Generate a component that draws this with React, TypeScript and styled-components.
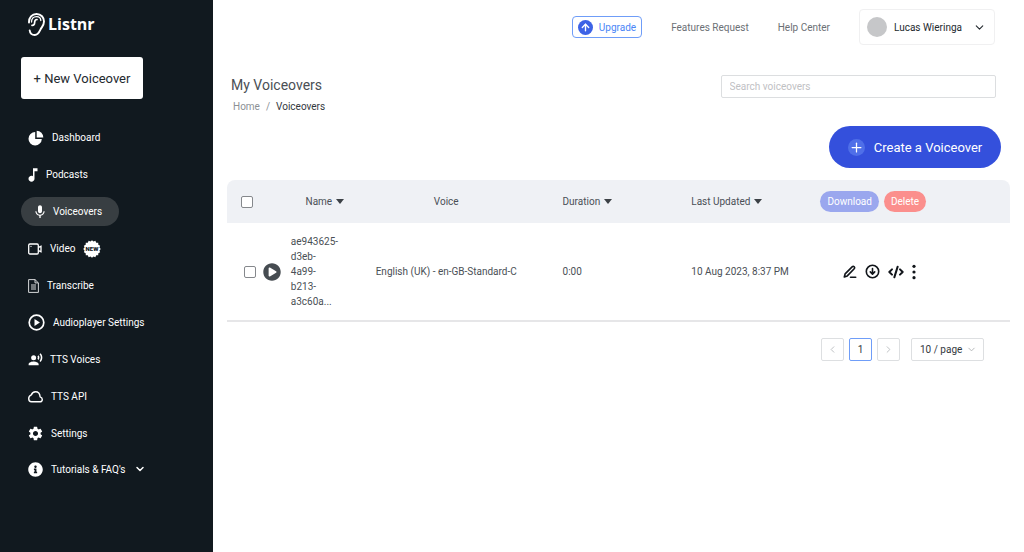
import React from "react";
import styled, { createGlobalStyle } from "styled-components";
import { ArrowUp, ChevronDown, ChevronLeft, ChevronRight, CodeXml, Plus } from "lucide-react";
import { MdMic, MdMusicNote, MdRecordVoiceOver, MdSettings } from "react-icons/md";
import { FaInfoCircle, FaPlayCircle } from "react-icons/fa";

const GlobalStyle = createGlobalStyle`
  *, *::before, *::after { box-sizing: border-box; }
  body {
    margin: 0;
    background: #fff;
    color: #4a4f55;
    font-family: Roboto, "Liberation Sans", sans-serif;
    font-size: 10px;
    line-height: 15px;
  }
  button, input, select { font: inherit; color: inherit; }
  button { cursor: pointer; padding: 0; border: 0; background: none; }
  a { color: inherit; text-decoration: none; }
  svg { flex: none; display: block; }
`;

const Page = styled.div`
  display: flex;
  min-height: 100vh;
`;

const Sidebar = styled.aside`
  flex: 0 0 213px;
  background: #11191f;
  color: #fff;
`;

const Logo = styled.a`
  display: flex;
  align-items: center;
  gap: 3px;
  height: 48px;
  padding-left: 28px;
  font-family: "Open Sans", sans-serif;
  font-size: 16px;
  font-weight: 700;
  line-height: 20px;
`;

const NewButton = styled.button`
  display: block;
  width: 122px;
  height: 42px;
  margin: 9px 0 24px 21px;
  border-radius: 3px;
  background: #fff;
  color: #23292e;
  font-size: 13px;
`;

const NavList = styled.ul<{ $row: number }>`
  display: grid;
  grid-auto-rows: ${(p) => p.$row}px;
  gap: 8px;
  margin: 0 0 8px;
  padding: 0 0 0 21px;
  list-style: none;
`;

const NavLink = styled.a<{ $active?: boolean }>`
  display: inline-flex;
  align-items: center;
  gap: 8px;
  height: 100%;
  padding: 0 ${(p) => (p.$active ? "17px 0 14px" : "7px")};
  border-radius: 15px;
  background: ${(p) => (p.$active ? "#383e42" : "transparent")};
`;

const NavText = styled.span`
  white-space: nowrap;
`;

const Main = styled.main`
  flex: 1;
  min-width: 0;
`;

const TopBar = styled.header`
  display: flex;
  align-items: center;
  justify-content: flex-end;
  gap: 29px;
  height: 54px;
  padding-right: 29px;
  color: #6b7075;
`;

const Upgrade = styled.button`
  display: flex;
  align-items: center;
  gap: 6px;
  height: 22px;
  padding: 0 5px;
  border: 1px solid #6f9df8;
  border-radius: 4px;
  color: #4a86f7;
`;

const Dot = styled.span<{ $size: number; $bg: string }>`
  display: grid;
  flex: none;
  place-items: center;
  width: ${(p) => p.$size}px;
  height: ${(p) => p.$size}px;
  border-radius: 50%;
  background: ${(p) => p.$bg};
  color: #fff;
`;

const UserMenu = styled.button`
  display: flex;
  align-items: center;
  gap: 7px;
  width: 136px;
  height: 36px;
  padding: 0 8px 0 7px;
  border: 1px solid #f0f0f1;
  border-radius: 4px;
  color: #23292e;
  white-space: nowrap;
  svg { margin-left: auto; }
`;

const Heading = styled.section`
  display: flex;
  align-items: flex-start;
  justify-content: space-between;
  padding: 21px 28px 0 18px;
`;

const Title = styled.h1`
  margin: 0;
  font-size: 14px;
  font-weight: 400;
  line-height: 20px;
`;

const Crumbs = styled.nav`
  display: flex;
  gap: 6px;
  margin-top: 4px;
  padding-left: 2px;
  color: #8c9095;
  [aria-current] { color: #33383d; }
`;

const Search = styled.input`
  width: 36%;
  height: 23px;
  padding: 0 8px;
  border: 1px solid #dcdee0;
  border-radius: 2px;
  background: #fff;
  &::placeholder { color: #bfc1c4; opacity: 1; }
`;

const Actions = styled.div`
  display: flex;
  justify-content: flex-end;
  padding: 12px 23px 12px 0;
`;

const Create = styled.button`
  display: flex;
  align-items: center;
  justify-content: center;
  gap: 9px;
  width: 172px;
  height: 42px;
  border-radius: 21px;
  background: #3450dc;
  color: #fff;
  font-size: 13px;
`;

const TableWrap = styled.div`
  padding: 0 14px;
`;

const Table = styled.table`
  width: 100%;
  table-layout: fixed;
  border-collapse: separate;
  border-spacing: 0;
  thead th { height: 43px; background: #eff1f5; font-weight: 400; }
  thead th:first-child { border-top-left-radius: 8px; }
  thead th:last-child { border-top-right-radius: 8px; }
  tbody td { height: 99px; border-bottom: 2px solid #e6e6e8; }
`;

const Th = styled.th<{ $w: number; $pad?: number; $align?: "left" | "center" }>`
  width: ${(p) => p.$w}%;
  padding: 0 0 0 ${(p) => p.$pad ?? 0}px;
  text-align: ${(p) => p.$align ?? "left"};
`;

const Td = styled.td<{ $pad?: number; $align?: "left" | "center" }>`
  padding: 0 0 0 ${(p) => p.$pad ?? 0}px;
  text-align: ${(p) => p.$align ?? "left"};
`;

const Sort = styled.button`
  display: inline-flex;
  align-items: center;
  gap: 4px;
  &::after {
    content: "";
    border: 4px solid transparent;
    border-top: 5px solid #3c4146;
    border-bottom: 0;
  }
`;

const Check = styled.input.attrs({ type: "checkbox" })`
  appearance: none;
  display: block;
  flex: none;
  width: 12px;
  height: 12px;
  margin: 0;
  border: 1px solid #85888c;
  border-radius: 2px;
  background: #fff;
`;

const Row = styled.div<{ $gap: number }>`
  display: flex;
  align-items: center;
  gap: ${(p) => p.$gap}px;
`;

const FileName = styled.div`
  width: 48px;
`;

const Pill = styled.button<{ $bg: string }>`
  height: 21px;
  padding: 0 7px;
  border-radius: 11px;
  background: ${(p) => p.$bg};
  color: #fff;
`;

const IconButton = styled.button`
  display: block;
  color: #11151a;
`;

const Pagination = styled.nav`
  display: flex;
  justify-content: flex-end;
  gap: 5px;
  padding: 16px 40px 0 0;
`;

const PageButton = styled.button<{ $active?: boolean }>`
  width: 23px;
  height: 23px;
  border: 1px solid ${(p) => (p.$active ? "#6f9df8" : "#dddfe1")};
  border-radius: 2px;
  color: ${(p) => (p.$active ? "#33383d" : "#b9bcbf")};
  display: grid;
  place-items: center;
`;

const SelectBox = styled.div`
  display: grid;
  align-items: center;
  width: 73px;
  height: 23px;
  margin-left: 6px;
  border: 1px solid #dddfe1;
  border-radius: 2px;
  select, svg { grid-area: 1 / 1; }
  select {
    appearance: none;
    width: 100%;
    padding: 0 8px;
    border: 0;
    background: none;
    color: #33383d;
  }
  svg { justify-self: end; margin-right: 6px; color: #b0b3b6; pointer-events: none; }
`;

const EarLogo = () => (
  <svg width="17" height="23" viewBox="0 0 17 23" fill="none" stroke="#fff" strokeLinecap="round">
    <path d="M1 9.500C.8 4.500 4 1 8.500 1c4.700 0 7.500 3.500 7.500 7.500 0 4-2.300 5.500-3.600 8.200-1.200 2.600-2.200 5.300-5.600 5.300-3 0-4.800-1.900-5.100-4.500" strokeWidth="1.900" />
    <path d="M3.500 9C3.500 5.500 5.500 3.600 8.500 3.600c2.600 0 4.300 1.700 4.300 4" strokeWidth="1.300" />
    <path d="M4 12.300c1.800.2 2.600-1 2.600-2.600C6.600 7.500 7.500 6.500 9 6.500" strokeWidth="1.700" />
  </svg>
);

const PieIcon = () => (
  <svg width="16" height="16" viewBox="0 0 16 16" fill="#fff">
    <path d="M7.200 2.100v6.800h6.600A6.650 6.650 0 1 1 7.200 2.100z" />
    <path d="M8.700.7A6.700 6.700 0 0 1 15.300 7.400H8.700z" />
  </svg>
);

const VideoIcon = () => (
  <svg width="14" height="12" viewBox="0 0 14 12" fill="none" stroke="#fff" strokeWidth="1.300">
    <rect x=".7" y="1" width="9.600" height="10" rx="1.200" />
    <path d="M10.500 4.300 13 3.300v5.400l-2.500-1" />
    <circle cx="3" cy="3.400" r=".6" fill="#fff" stroke="none" />
  </svg>
);

const DocumentIcon = () => (
  <svg width="11" height="14" viewBox="0 0 11 14" fill="none" stroke="#d5d7d8" strokeWidth="1">
    <path d="M.6.6H7l3.400 3.300v9.500H.6zM7 .6v3.300h3.400" />
    <path d="M3 6h5M3 8h5M3 10h5" />
  </svg>
);

const PlayRingIcon = () => (
  <svg width="17" height="17" viewBox="0 0 17 17">
    <circle cx="8.500" cy="8.500" r="7.300" fill="none" stroke="#fff" strokeWidth="1.700" />
    <path d="M6.500 4.900v7.200l5.400-3.600z" fill="#fff" />
  </svg>
);

const CloudIcon = () => (
  <svg width="15" height="13" viewBox="0 0 15 13" fill="none" stroke="#fff" strokeWidth="1.400" strokeLinejoin="round">
    <path d="M3.500 11.800h8.300c1.500 0 2.500-1 2.500-2.400 0-1.300-.9-2.200-2.200-2.600C11.900 3.900 10 1.800 7.500 1.800c-2 0-3.500 1.100-4.200 3.100C1.700 5.500.7 6.900.7 8.600c0 1.800 1.200 3.200 2.800 3.200z" />
  </svg>
);

const EditIcon = () => (
  <svg width="14" height="14" viewBox="0 0 14 14" fill="none" stroke="currentColor" strokeWidth="1.600" strokeLinejoin="round" strokeLinecap="round">
    <path d="M1.300 12 2.100 8.900 9.100 1.900c.7-.7 1.500-.7 2.100-.1.600.6.600 1.400 0 2L4.300 10.900z" />
    <path d="M7.500 12.300h5.200" />
  </svg>
);

const DownloadIcon = () => (
  <svg width="15" height="15" viewBox="0 0 15 15" fill="none" stroke="currentColor" strokeWidth="1.600" strokeLinecap="round" strokeLinejoin="round">
    <circle cx="7.500" cy="7.500" r="6.200" />
    <path d="M7.500 4.500v5.400M5.300 7.900l2.200 2.200 2.200-2.200" />
  </svg>
);

const DotsIcon = () => (
  <svg width="4" height="16" viewBox="0 0 4 16" fill="currentColor">
    <circle cx="2" cy="2.300" r="1.600" />
    <circle cx="2" cy="8" r="1.600" />
    <circle cx="2" cy="13.700" r="1.600" />
  </svg>
);

const burst = Array.from({ length: 32 }, (_, i) => {
  const r = i % 2 ? 7.6 : 8.8;
  const a = (i * Math.PI) / 16;
  return `${(9 + r * Math.cos(a)).toFixed(2)},${(9 + r * Math.sin(a)).toFixed(2)}`;
}).join(" ");

const NewBadge = () => (
  <svg width="18" height="18" viewBox="0 0 18 18">
    <polygon points={burst} fill="#fff" />
    <text x="9" y="11" textAnchor="middle" fontSize="6" fontWeight="900" fill="#11191f">NEW</text>
  </svg>
);

type NavItem = { label: string; icon: React.ReactNode; extra?: React.ReactNode; active?: boolean };

/* Crops an icon's built-in side margins so that labels follow the visible glyph. */
const Glyph = styled.span<{ $w: number }>`
  display: flex;
  justify-content: center;
  width: ${(p) => p.$w}px;
`;

const primary: NavItem[] = [
  { label: "Dashboard", icon: <PieIcon /> },
  { label: "Podcasts", icon: <Glyph $w={10}><MdMusicNote size={18} /></Glyph> },
  { label: "Voiceovers", icon: <Glyph $w={10}><MdMic size={16} /></Glyph>, active: true },
  { label: "Video", icon: <VideoIcon />, extra: <NewBadge /> },
  { label: "Transcribe", icon: <DocumentIcon /> },
  { label: "Audioplayer Settings", icon: <PlayRingIcon /> },
  { label: "TTS Voices", icon: <Glyph $w={14}><MdRecordVoiceOver size={15} /></Glyph> },
  { label: "TTS API", icon: <CloudIcon /> },
];

const secondary: NavItem[] = [
  { label: "Settings", icon: <Glyph $w={15}><MdSettings size={17} /></Glyph> },
  { label: "Tutorials & FAQ's", icon: <Glyph $w={15}><FaInfoCircle size={15} /></Glyph>, extra: <ChevronDown size={12} strokeWidth={3} /> },
];

const Nav = ({ items, row }: { items: NavItem[]; row: number }) => (
  <NavList $row={row}>
    {items.map((item) => (
      <li key={item.label}>
        <NavLink href="#" $active={item.active} aria-current={item.active ? "page" : undefined}>
          {item.icon}
          <NavText>{item.label}</NavText>
          {item.extra}
        </NavLink>
      </li>
    ))}
  </NavList>
);

export default function App() {
  return (
    <Page>
      <GlobalStyle />
      <Sidebar>
        <Logo href="#"><EarLogo />Listnr</Logo>
        <NewButton>+ New Voiceover</NewButton>
        <Nav items={primary} row={29} />
        <Nav items={secondary} row={28} />
      </Sidebar>
      <Main>
        <TopBar>
          <Upgrade>
            <Dot $size={15} $bg="#3d63e6"><ArrowUp size={11} strokeWidth={3} /></Dot>
            Upgrade
          </Upgrade>
          <a href="#">Features Request</a>
          <a href="#">Help Center</a>
          <UserMenu>
            <Dot $size={20} $bg="#c6c7c9" />
            Lucas Wieringa
            <ChevronDown size={13} strokeWidth={2} />
          </UserMenu>
        </TopBar>
        <Heading>
          <div>
            <Title>My Voiceovers</Title>
            <Crumbs aria-label="Breadcrumb">
              <a href="#">Home</a>
              <span>/</span>
              <span aria-current="page">Voiceovers</span>
            </Crumbs>
          </div>
          <Search type="search" placeholder="Search voiceovers" aria-label="Search voiceovers" />
        </Heading>
        <Actions>
          <Create>
            <Dot $size={17} $bg="#4f6fe8"><Plus size={15} strokeWidth={2} /></Dot>
            Create a Voiceover
          </Create>
        </Actions>
        <TableWrap>
          <Table>
            <thead>
              <tr>
                <Th $w={7} $pad={14}><Check aria-label="Select all" /></Th>
                <Th $w={11} $align="center"><Sort>Name</Sort></Th>
                <Th $w={20} $align="center">Voice</Th>
                <Th $w={19} $pad={38}><Sort>Duration</Sort></Th>
                <Th $w={17} $pad={18}><Sort>Last Updated</Sort></Th>
                <Th $w={26} $pad={14}>
                  <Row $gap={5}>
                    <Pill $bg="#9aa7ee">Download</Pill>
                    <Pill $bg="#fb8f8d">Delete</Pill>
                  </Row>
                </Th>
              </tr>
            </thead>
            <tbody>
              <tr>
                <Td $pad={17}>
                  <Row $gap={7}>
                    <Check aria-label="Select voiceover" />
                    <IconButton aria-label="Play"><FaPlayCircle size={18} color="#464c51" /></IconButton>
                  </Row>
                </Td>
                <Td $pad={9}>
                  <FileName>ae943625-<wbr />d3eb-<wbr />4a99-<wbr />b213-<wbr />a3c60a...</FileName>
                </Td>
                <Td $align="center">English (UK) - en-GB-Standard-C</Td>
                <Td $pad={38}>0:00</Td>
                <Td $pad={18}>10 Aug 2023, 8:37 PM</Td>
                <Td $pad={37}>
                  <Row $gap={8}>
                    <IconButton aria-label="Edit"><EditIcon /></IconButton>
                    <IconButton aria-label="Download"><DownloadIcon /></IconButton>
                    <IconButton aria-label="Embed"><CodeXml size={16} strokeWidth={3} /></IconButton>
                    <IconButton aria-label="More"><DotsIcon /></IconButton>
                  </Row>
                </Td>
              </tr>
            </tbody>
          </Table>
        </TableWrap>
        <Pagination aria-label="Pagination">
          <PageButton aria-label="Previous page"><ChevronLeft size={11} strokeWidth={2} /></PageButton>
          <PageButton $active>1</PageButton>
          <PageButton aria-label="Next page"><ChevronRight size={11} strokeWidth={2} /></PageButton>
          <SelectBox>
            <select aria-label="Rows per page"><option>10 / page</option></select>
            <ChevronDown size={11} strokeWidth={2} />
          </SelectBox>
        </Pagination>
      </Main>
    </Page>
  );
}
